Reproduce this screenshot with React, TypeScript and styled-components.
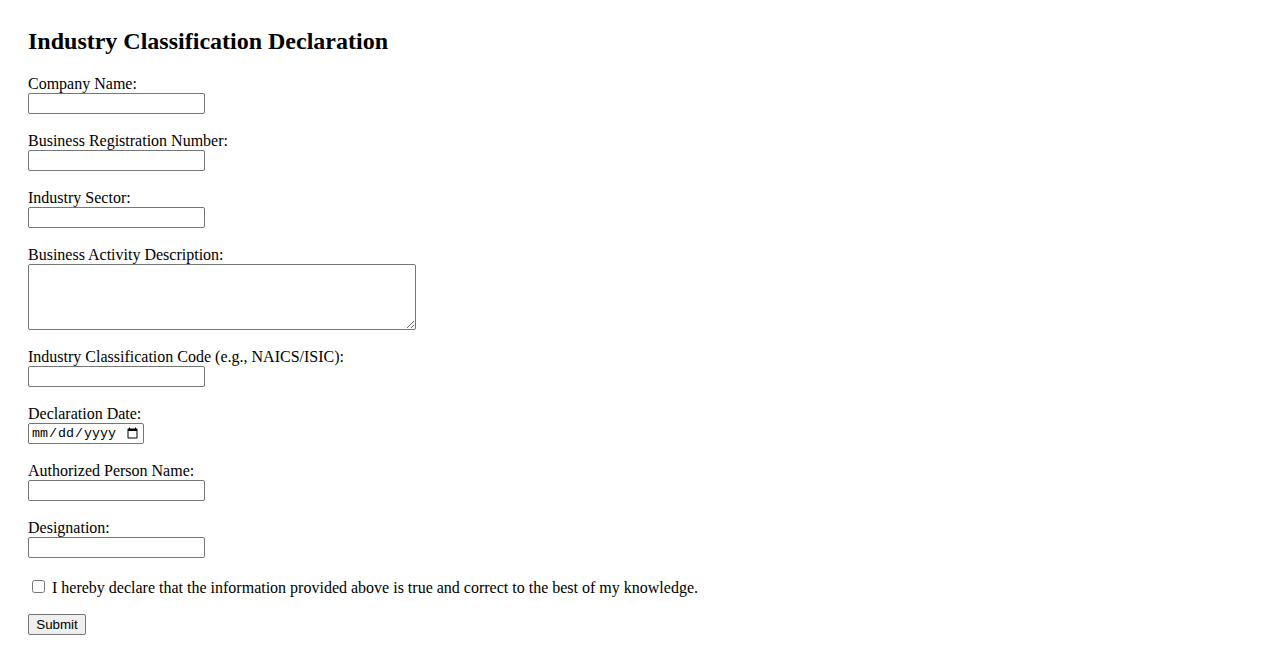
import React from 'react';
import styled, { createGlobalStyle } from 'styled-components';

const GlobalStyle = createGlobalStyle`
  body {
    margin: 8px;
    font-family: "Liberation Serif", "Times New Roman", serif;
    font-size: 16px;
    color: #000;
    background: #fff;
  }
`;

const Page = styled.div`
  padding: 20px;
`;

const Title = styled.h2`
  font-size: 24px;
  font-weight: bold;
  margin: 0 0 20px;
`;

const Field = styled.div`
  margin-bottom: 18px;
`;

const Label = styled.label`
  display: block;
`;

const TextInput = styled.input`
  font-family: "Liberation Sans", Arial, sans-serif;
  font-size: 13.333px;
  width: 177px;
  height: 21px;
  box-sizing: border-box;
  padding: 1px 2px;
  border: 1px solid #767676;
  border-radius: 2px;
  margin: 0;
`;

const DateInput = styled(TextInput)`
  font-family: "Liberation Mono", "DejaVu Sans Mono", monospace;
  width: 116px;
  padding: 1px 2px;
`;

const TextArea = styled.textarea`
  font-family: "Liberation Mono", monospace;
  font-size: 13.333px;
  width: 388px;
  height: 66px;
  box-sizing: border-box;
  border: 1px solid #767676;
  border-radius: 2px;
  margin: 0;
  vertical-align: bottom;
`;

const CheckLabel = styled.label`
  display: block;
  padding-top: 1px;
  margin-bottom: 17px;
`;

const Check = styled.input`
  width: 13px;
  height: 13px;
  margin: 3px 3px 3px 4px;
`;

const SubmitButton = styled.button`
  font-family: "Liberation Sans", Arial, sans-serif;
  font-size: 13.333px;
  padding: 1px 6px;
  height: 21px;
  width: 58px;
  border: 1px solid #767676;
  border-radius: 2px;
  background: #efefef;
  color: #000;
  margin: 0;
`;

const fields = [
  'Company Name:',
  'Business Registration Number:',
  'Industry Sector:',
];

export default function App() {
  return (
    <Page>
      <GlobalStyle />
      <Title>Industry Classification Declaration</Title>
      <form onSubmit={(e) => e.preventDefault()}>
        {fields.map((f) => (
          <Field key={f}>
            <Label>{f}</Label>
            <TextInput type="text" />
          </Field>
        ))}
        <Field>
          <Label>Business Activity Description:</Label>
          <TextArea />
        </Field>
        <Field>
          <Label>Industry Classification Code (e.g., NAICS/ISIC):</Label>
          <TextInput type="text" />
        </Field>
        <Field>
          <Label>Declaration Date:</Label>
          <DateInput type="date" />
        </Field>
        <Field>
          <Label>Authorized Person Name:</Label>
          <TextInput type="text" />
        </Field>
        <Field>
          <Label>Designation:</Label>
          <TextInput type="text" />
        </Field>
        <CheckLabel>
          <Check type="checkbox" /> I hereby declare that the information provided above is true and correct to the best of my knowledge.
        </CheckLabel>
        <SubmitButton type="submit">Submit</SubmitButton>
      </form>
    </Page>
  );
}
